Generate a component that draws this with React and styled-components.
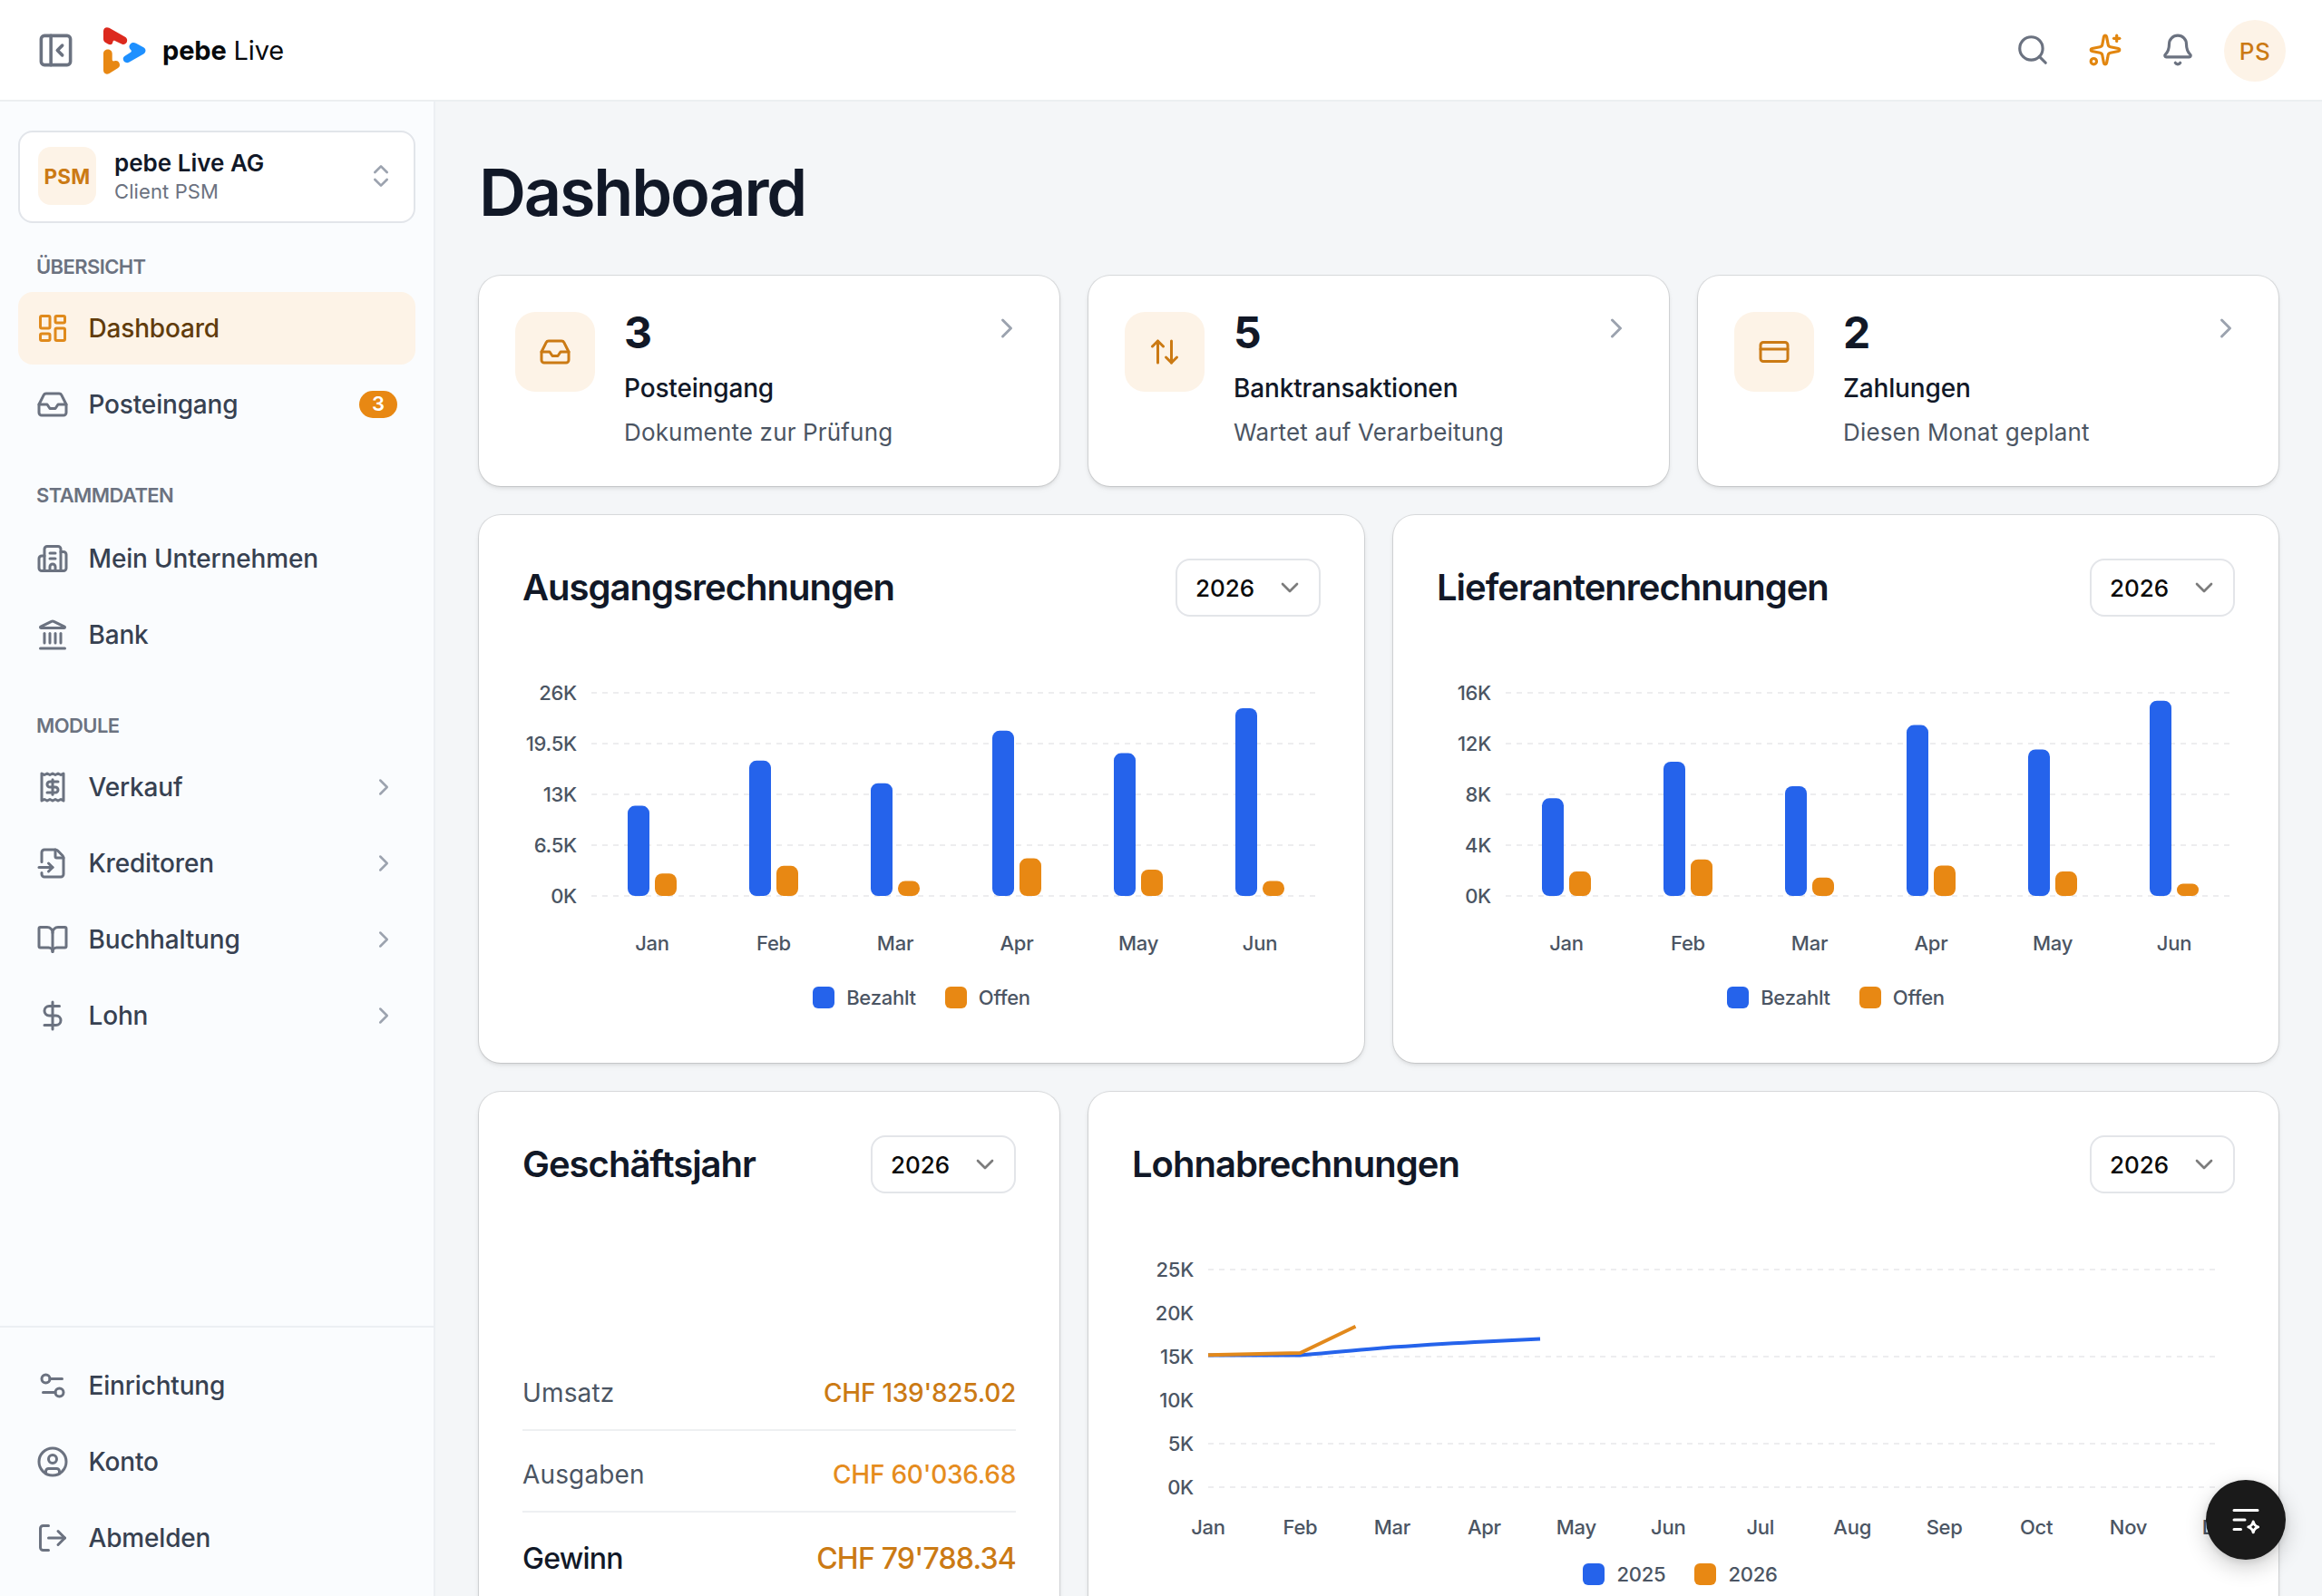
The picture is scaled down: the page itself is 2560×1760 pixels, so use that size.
import React from "react";
import styled, { createGlobalStyle } from "styled-components";
import {
  ArrowUpDown,
  Bell,
  BookOpen,
  Building2,
  ChevronDown,
  ChevronRight,
  ChevronsUpDown,
  CircleUser,
  CreditCard,
  DollarSign,
  FileInput,
  Inbox,
  Landmark,
  LayoutDashboard,
  LogOut,
  PanelLeftClose,
  Receipt,
  Search,
  Settings2,
  Sparkles,
} from "lucide-react";

const GlobalStyle = createGlobalStyle`
  * {
    box-sizing: border-box;
  }

  body {
    margin: 0;
    background: #f4f6f8;
    font-family: Inter, "Liberation Sans", sans-serif;
    color: #111827;
    -webkit-font-smoothing: antialiased;
  }

  svg {
    display: block;
    flex-shrink: 0;
  }
`;

const Page = styled.div`
  width: 2560px;
  height: 1760px;
  display: flex;
  flex-direction: column;
  overflow: hidden;
`;

/* ---------- header ---------- */

const Header = styled.header`
  flex: 0 0 112px;
  display: flex;
  align-items: center;
  padding: 0 40px;
  background: #fff;
  box-shadow: inset 0 -2px 0 #eceff1;
  color: #6b7280;
`;

const IconSlot = styled.div`
  margin-bottom: 2px;
  color: ${(props) => (props.$accent ? "#e2860f" : "#6b7280")};
`;

const Brand = styled.div`
  display: flex;
  align-items: center;
  gap: 18px;
  margin-left: 31px;
  color: #06090c;
  font-size: 29px;
  line-height: 40px;
  letter-spacing: -0.15px;

  b {
    font-weight: 700;
  }
`;

const HeaderActions = styled.div`
  display: flex;
  align-items: center;
  gap: 42px;
  margin-left: auto;
`;

const Avatar = styled.div`
  width: 68px;
  height: 68px;
  margin-left: 32px;
  border-radius: 50%;
  display: flex;
  align-items: center;
  justify-content: center;
  background: #fdf3e7;
  color: #cb7a14;
  font-size: 26px;
  font-weight: 500;
  letter-spacing: 0.4px;
`;

/* ---------- sidebar ---------- */

const Body = styled.div`
  flex: 1;
  min-height: 0;
  display: flex;
`;

const Sidebar = styled.aside`
  flex: 0 0 480px;
  display: flex;
  flex-direction: column;
  background: #fafcfe;
  border-right: 2px solid #eceff3;
`;

const ClientSwitch = styled.button`
  height: 102px;
  margin: 32px 20px 0;
  padding: 0 20px 2px;
  display: flex;
  align-items: center;
  gap: 20px;
  border: 2px solid #e2e5ea;
  border-radius: 16px;
  background: #fff;
  font-family: inherit;
  text-align: left;
  color: #9ca3af;
`;

const ClientBadge = styled.div`
  width: 64px;
  height: 64px;
  border-radius: 14px;
  display: flex;
  align-items: center;
  justify-content: center;
  background: #fdf3e7;
  color: #cb7a14;
  font-size: 22.500px;
  font-weight: 700;
  letter-spacing: 0.2px;
`;

const ClientText = styled.div`
  flex: 1;
`;

const ClientName = styled.div`
  font-size: 26px;
  font-weight: 600;
  line-height: 34px;
  color: #111827;
`;

const ClientSub = styled.div`
  font-size: 22px;
  line-height: 29px;
  letter-spacing: 0.1px;
  color: #6b7280;
`;

const SectionLabel = styled.div`
  margin: ${(props) => props.$top}px 0 ${(props) => props.$bottom}px 40px;
  font-size: 22px;
  font-weight: 600;
  line-height: 28px;
  letter-spacing: -0.6px;
  color: #6b7280;
`;

const NavList = styled.nav`
  display: flex;
  flex-direction: column;
  gap: 4px;
  padding: 0 20px;
`;

const NavRow = styled.a`
  height: 80px;
  padding: 0 20px;
  display: flex;
  align-items: center;
  gap: 20px;
  border-radius: 16px;
  background: ${(props) => (props.$active ? "#fdf3e7" : "transparent")};
  color: ${(props) => (props.$active ? "#e08a1c" : "#6b7280")};
`;

const NavText = styled.span`
  flex: 1;
  padding-left: 1.500px;
  font-size: 28px;
  font-weight: 500;
  letter-spacing: -0.17px;
  color: ${(props) => (props.$active ? "#613c0c" : "#374151")};
`;

const Count = styled.span`
  width: 42px;
  height: 30px;
  border-radius: 15px;
  background: #e88813;
  color: #fff;
  font-size: 22px;
  font-weight: 600;
  line-height: 29px;
  text-align: center;
`;

const SidebarFooter = styled.div`
  margin-top: auto;
  padding: 24px 0;
  border-top: 2px solid #eceff3;
`;

/* ---------- content ---------- */

const Main = styled.main`
  flex: 1;
  display: flex;
  flex-direction: column;
  gap: 32px;
  padding: 0 48px;
`;

const Title = styled.h1`
  margin: 56px 0 16px;
  font-size: 72px;
  font-weight: 600;
  line-height: 88px;
  letter-spacing: -2.2px;
`;

const Grid = styled.div`
  display: grid;
  grid-template-columns: ${(props) => props.$columns};
  gap: 32px;
`;

const Card = styled.section`
  border-radius: 24px;
  background: #fff;
  box-shadow: 0 0 0 1px rgba(0, 0, 0, 0.1), 0 2px 4px rgba(0, 0, 0, 0.1),
    0 4px 8px rgba(0, 0, 0, 0.03);
`;

const StatCard = styled(Card)`
  height: 232px;
  padding: 40px;
  display: flex;
  align-items: flex-start;
  gap: 32px;
  color: #9ca3af;
`;

const StatIcon = styled.div`
  width: 88px;
  height: 88px;
  border-radius: 22px;
  display: flex;
  align-items: center;
  justify-content: center;
  background: #fdf3e7;
  color: #cb7a14;
`;

const StatText = styled.div`
  flex: 1;
`;

const StatValue = styled.div`
  margin-top: -6px;
  font-size: 48px;
  font-weight: 700;
  line-height: 58px;
  color: #111827;
`;

const StatName = styled.div`
  margin-top: 12px;
  font-size: 28px;
  font-weight: 500;
  line-height: 40px;
  letter-spacing: -0.16px;
  color: #111827;
`;

const StatHint = styled.div`
  margin-top: 9px;
  font-size: 26px;
  line-height: 40px;
  letter-spacing: 0.16px;
  color: #4b5563;
`;

const Panel = styled(Card)`
  height: 604px;
  padding: 48px;
`;

const PanelHead = styled.div`
  height: 64px;
  display: flex;
  align-items: center;
  justify-content: space-between;
`;

const PanelTitle = styled.h2`
  margin: 0 0 2px;
  font-size: 40px;
  font-weight: 600;
  letter-spacing: -1px;
`;

const YearButton = styled.button`
  width: 160px;
  height: 64px;
  padding: 0 16px 0 20px;
  display: flex;
  align-items: center;
  justify-content: space-between;
  border: 2px solid #e3e5e9;
  border-radius: 16px;
  background: #fff;
  font-family: inherit;
  font-size: 26px;
  font-weight: 500;
  color: #0a0a0a;

  svg {
    color: #7c7c7c;
  }
`;

const ChartSvg = styled.svg`
  overflow: visible;

  text {
    font-size: 22px;
    font-weight: 500;
    letter-spacing: -0.25px;
    fill: #4b5563;
  }
`;

const Legend = styled.div`
  display: flex;
  justify-content: center;
  gap: 32px;
  margin-top: ${(props) => props.$top}px;
  padding-right: ${(props) => props.$shift || 0}px;
`;

const LegendItem = styled.div`
  display: flex;
  align-items: center;
  gap: 13px;
  height: 24px;
  font-size: 22px;
  font-weight: 500;
  letter-spacing: -0.25px;
  color: #4b5563;
`;

const Swatch = styled.span`
  width: 24px;
  height: 24px;
  border-radius: 6px;
  background: ${(props) => props.$color};
`;

const Figures = styled.div`
  margin-top: 172px;
`;

const FigureRow = styled.div`
  display: flex;
  justify-content: space-between;
  padding: ${(props) => (props.$total ? "29px 0 0" : "26px 0 18px")};
  border-bottom: ${(props) => (props.$total ? "none" : "2px solid #eef0f2")};
  font-size: ${(props) => (props.$total ? 32 : 28)}px;
  font-weight: ${(props) => (props.$total ? 500 : 400)};
  line-height: 44px;
  letter-spacing: ${(props) => (props.$total ? "-0.75px" : "0.15px")};
  color: ${(props) => (props.$total ? "#111827" : "#4b5563")};
`;

const Amount = styled.span`
  font-weight: 500;
  letter-spacing: ${(props) => (props.$total ? "-0.8px" : "-0.25px")};
  color: ${(props) => (props.$light ? "#e58c1e" : "#cb7a14")};
`;

const AssistButton = styled.button`
  position: fixed;
  right: 40px;
  bottom: 40px;
  width: 88px;
  height: 88px;
  padding: 0;
  border: none;
  border-radius: 50%;
  display: flex;
  align-items: center;
  justify-content: center;
  background: #1a1a1a;
  color: #fff;
  box-shadow: 0 8px 24px rgba(0, 0, 0, 0.2), 0 2px 8px rgba(0, 0, 0, 0.1);
`;

const BLUE = "#2563eb";
const ORANGE = "#e88813";

const overview = [
  { icon: LayoutDashboard, text: "Dashboard", active: true },
  { icon: Inbox, text: "Posteingang", count: 3 },
];

const masterData = [
  { icon: Building2, text: "Mein Unternehmen" },
  { icon: Landmark, text: "Bank" },
];

const modules = [
  { icon: Receipt, text: "Verkauf", nested: true },
  { icon: FileInput, text: "Kreditoren", nested: true },
  { icon: BookOpen, text: "Buchhaltung", nested: true },
  { icon: DollarSign, text: "Lohn", nested: true },
];

const account = [
  { icon: Settings2, text: "Einrichtung" },
  { icon: CircleUser, text: "Konto" },
  { icon: LogOut, text: "Abmelden" },
];

const stats = [
  { icon: Inbox, value: 3, name: "Posteingang", hint: "Dokumente zur Prüfung" },
  { icon: ArrowUpDown, value: 5, name: "Banktransaktionen", hint: "Wartet auf Verarbeitung" },
  { icon: CreditCard, value: 2, name: "Zahlungen", hint: "Diesen Monat geplant" },
];

const months = ["Jan", "Feb", "Mar", "Apr", "May", "Jun", "Jul", "Aug", "Sep", "Oct", "Nov", "Dec"];

const outgoing = {
  max: 26,
  ticks: ["26K", "19.5K", "13K", "6.5K", "0K"],
  paid: [11.54, 17.31, 14.42, 21.15, 18.27, 24.04],
  open: [2.88, 3.85, 1.92, 4.81, 3.37, 1.92],
};

const supplier = {
  max: 16,
  ticks: ["16K", "12K", "8K", "4K", "0K"],
  paid: [7.69, 10.58, 8.65, 13.46, 11.54, 15.38],
  open: [1.92, 2.88, 1.44, 2.4, 1.92, 0.96],
};

const Logo = () => (
  <svg width="47" height="52" viewBox="0 0 47 52">
    <path
      fill="#dc291e"
      d="M0 4.2C0 .8 3.4-.9 6.4.8L24 10.8c4.400 2.600 1.600 9.800-3.400 7.900L13.200 15.200c-1.700-.8-2.600-.3-2.900 1.500-.5 2.600-3 3.100-5.300 1.800L2.400 17C.8 16.100 0 14.800 0 13z"
    />
    <path
      fill="#1e90ff"
      d="M29.800 18.400c1.700-1.700 4-1.900 6.200-.7l8.300 4.500c2.900 1.600 2.900 5.600 0 7.200L28.500 38.500c-4.900 2.700-9.400-3.700-4.900-6.700l5.900-3.700c1.600-1 1.800-2 .5-3.300-1.800-1.800-2.200-4.500-.2-6.400z"
    />
    <path
      fill="#e88813"
      d="M0 29.200c0-6.300 9.700-6.300 9.700 0v6.300c0 1.700.9 2.200 2.500 1.800 3.200-.9 5.800 1.100 5.800 4.200 0 1.700-.8 3-2.300 3.800L6.500 50.900C3.400 52.800 0 51.200 0 47.600z"
    />
  </svg>
);

const AssistIcon = () => (
  <svg width="36" height="36" viewBox="0 0 36 36" fill="none" stroke="currentColor" strokeWidth="3" strokeLinecap="round" strokeLinejoin="round">
    <path d="M5 7.500h26M5 18h12M5 28.500h7.500" />
    <path d="M26.200 20c.9 3.600 1.900 4.900 5.400 5.900-3.500 1-4.500 2.300-5.400 5.900-.9-3.600-1.900-4.900-5.400-5.900 3.500-1 4.500-2.300 5.400-5.900z" />
  </svg>
);

const NavItems = ({ items }) => (
  <NavList>
    {items.map(({ icon: Icon, text, active, count, nested }) => (
      <NavRow key={text} $active={active}>
        <Icon size={36} />
        <NavText $active={active}>{text}</NavText>
        {count && <Count>{count}</Count>}
        {nested && <ChevronRight size={30} color="#9ca3af" />}
      </NavRow>
    ))}
  </NavList>
);

const YearSelect = () => (
  <YearButton>
    2026
    <ChevronDown size={32} />
  </YearButton>
);

const GridLine = ({ x1, x2, y }) => (
  <line x1={x1} x2={x2} y1={y} y2={y} stroke="#ededef" strokeWidth="2" strokeDasharray="6 6" />
);

const BarChart = ({ data }) => {
  const top = 84;
  const height = 224;
  const step = height / 4;
  const band = 134;
  const bar = (value, x, color) => {
    const h = (value / data.max) * height;
    return <rect x={x} y={top + height - h} width="24" height={h} rx={Math.min(8, h / 2)} fill={color} />;
  };

  return (
    <ChartSvg width="880" height="380" viewBox="0 0 880 380">
      {data.ticks.map((tick, i) => (
        <g key={tick}>
          <GridLine x1={76} x2={880} y={top + i * step} />
          <text x="60" y={top + i * step + 8} textAnchor="end">{tick}</text>
        </g>
      ))}
      {data.paid.map((value, i) => {
        const center = 76 + band * (i + 0.5);
        return (
          <g key={months[i]}>
            {bar(value, center - 27, BLUE)}
            {bar(data.open[i], center + 3, ORANGE)}
            <text x={center} y="368" textAnchor="middle">{months[i]}</text>
          </g>
        );
      })}
    </ChartSvg>
  );
};

const PayrollChart = () => {
  const top = 84;
  const ticks = ["25K", "20K", "15K", "10K", "5K", "0K"];
  const lines = [0, 2, 4, 5];

  return (
    <ChartSvg width="1216" height="380" viewBox="0 0 1216 380">
      {lines.map((i) => (
        <GridLine key={i} x1={84} x2={1200} y={top + i * 48} />
      ))}
      {ticks.map((tick, i) => (
        <text key={tick} x="68" y={top + i * 48 + 8} textAnchor="end">{tick}</text>
      ))}
      {months.map((month, i) => (
        <text key={month} x={84 + (i * 1116) / 11} y="376" textAnchor="middle">{month}</text>
      ))}
      <path d="M84 178.400L185.500 178.400C219 176 253 172.300 287 169.600C321 167.200 355 165 388.500 163.400C409 162.400 430 161.500 450 160.600" fill="none" stroke={BLUE} strokeWidth="4" />
      <path d="M84 178.200L185.500 176L246.500 146.800" fill="none" stroke="#e2891c" strokeWidth="4" />
    </ChartSvg>
  );
};

const ChartLegend = ({ labels, top, shift }) => (
  <Legend $top={top} $shift={shift}>
    <LegendItem>
      <Swatch $color={BLUE} />
      {labels[0]}
    </LegendItem>
    <LegendItem>
      <Swatch $color={ORANGE} />
      {labels[1]}
    </LegendItem>
  </Legend>
);

const InvoicePanel = ({ title, data }) => (
  <Panel>
    <PanelHead>
      <PanelTitle>{title}</PanelTitle>
      <YearSelect />
    </PanelHead>
    <BarChart data={data} />
    <ChartLegend labels={["Bezahlt", "Offen"]} top={28} />
  </Panel>
);

export default function App() {
  return (
    <Page>
      <GlobalStyle />
      <Header>
        <IconSlot>
          <PanelLeftClose size={43} />
        </IconSlot>
        <Brand>
          <Logo />
          <span>
            <b>pebe</b> Live
          </span>
        </Brand>
        <HeaderActions>
          <IconSlot>
            <Search size={38} />
          </IconSlot>
          <IconSlot $accent>
            <Sparkles size={38} />
          </IconSlot>
          <IconSlot>
            <Bell size={38} />
          </IconSlot>
        </HeaderActions>
        <Avatar>PS</Avatar>
      </Header>

      <Body>
        <Sidebar>
          <ClientSwitch>
            <ClientBadge>PSM</ClientBadge>
            <ClientText>
              <ClientName>pebe Live AG</ClientName>
              <ClientSub>Client PSM</ClientSub>
            </ClientText>
            <ChevronsUpDown size={32} />
          </ClientSwitch>
          <SectionLabel $top={34} $bottom={14}>ÜBERSICHT</SectionLabel>
          <NavItems items={overview} />
          <SectionLabel $top={46} $bottom={16}>STAMMDATEN</SectionLabel>
          <NavItems items={masterData} />
          <SectionLabel $top={46} $bottom={14}>MODULE</SectionLabel>
          <NavItems items={modules} />
          <SidebarFooter>
            <NavItems items={account} />
          </SidebarFooter>
        </Sidebar>

        <Main>
          <Title>Dashboard</Title>
          <Grid $columns="repeat(3, 1fr)">
            {stats.map(({ icon: Icon, value, name, hint }) => (
              <StatCard key={name}>
                <StatIcon>
                  <Icon size={36} />
                </StatIcon>
                <StatText>
                  <StatValue>{value}</StatValue>
                  <StatName>{name}</StatName>
                  <StatHint>{hint}</StatHint>
                </StatText>
                <ChevronRight size={36} />
              </StatCard>
            ))}
          </Grid>
          <Grid $columns="1fr 1fr">
            <InvoicePanel title="Ausgangsrechnungen" data={outgoing} />
            <InvoicePanel title="Lieferantenrechnungen" data={supplier} />
          </Grid>
          <Grid $columns="640px 1fr">
            <Panel>
              <PanelHead>
                <PanelTitle>Geschäftsjahr</PanelTitle>
                <YearSelect />
              </PanelHead>
              <Figures>
                <FigureRow>
                  Umsatz <Amount>CHF 139'825.02</Amount>
                </FigureRow>
                <FigureRow>
                  Ausgaben <Amount $light>CHF 60'036.68</Amount>
                </FigureRow>
                <FigureRow $total>
                  Gewinn <Amount $total>CHF 79'788.34</Amount>
                </FigureRow>
              </Figures>
            </Panel>
            <Panel>
              <PanelHead>
                <PanelTitle>Lohnabrechnungen</PanelTitle>
                <YearSelect />
              </PanelHead>
              <PayrollChart />
              <ChartLegend labels={["2025", "2026"]} top={28} shift={7} />
            </Panel>
          </Grid>
        </Main>
      </Body>

      <AssistButton>
        <AssistIcon />
      </AssistButton>
    </Page>
  );
}
